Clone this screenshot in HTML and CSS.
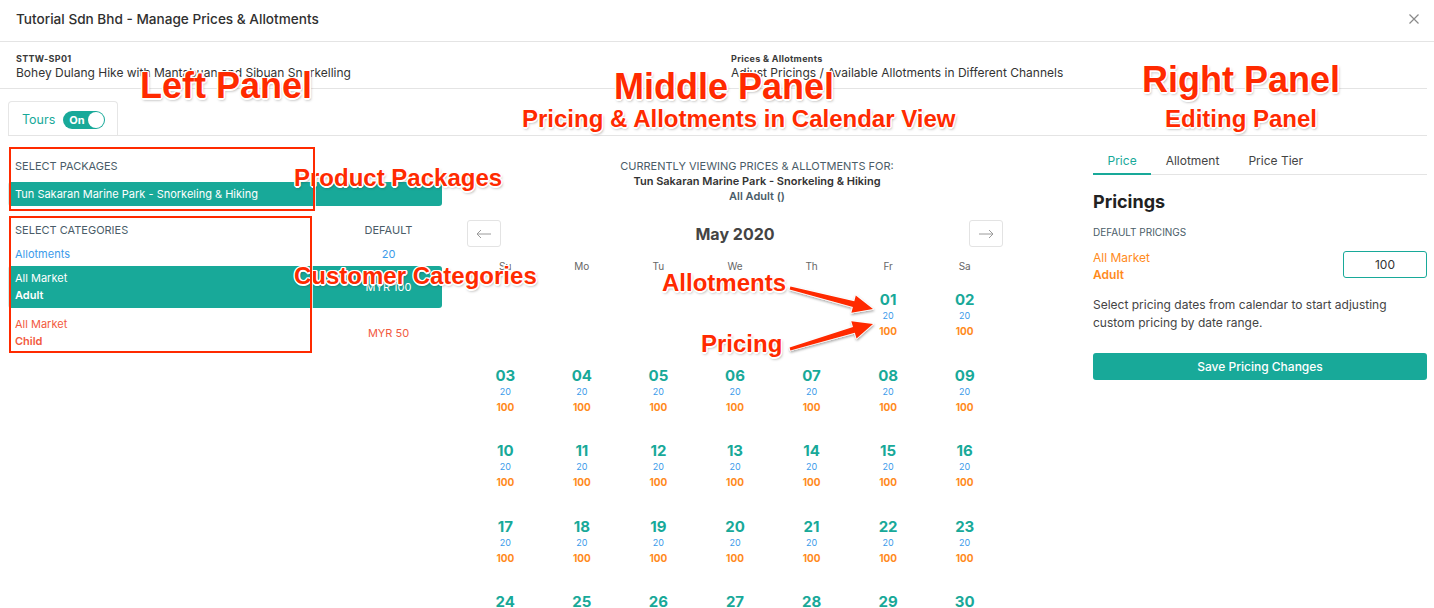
FILE: index.html
```html
<!doctype html>
<html lang="en">
<head>
    <meta charset="UTF-8">
    <meta name="viewport" content="width=device-width, initial-scale=1.0">
    <title>Manage Prices &amp; Allotments</title>
    <link rel="stylesheet" href="styles.css">
</head>
<body>
<div class="modal">
    <header class="modal-header">
        <h1 class="modal-title">Tutorial Sdn Bhd - Manage Prices &amp; Allotments</h1>
        <button class="close-btn" aria-label="Close">
            <svg width="10" height="10" viewBox="0 0 10 10"><path d="M0.5 0.5 L9.5 9.5 M9.5 0.5 L0.5 9.5" stroke="#8a8a8a" stroke-width="1.2" fill="none"/></svg>
        </button>
    </header>

    <div class="product-meta">
        <div class="meta-item">
            <div class="meta-label">STTW-SP01</div>
            <div class="meta-value">Bohey Dulang Hike with Mantabuan and Sibuan Snorkelling</div>
        </div>
        <div class="meta-item">
            <div class="meta-label">Prices &amp; Allotments</div>
            <div class="meta-value">Adjust Pricings / Available Allotments in Different Channels</div>
        </div>
    </div>

    <div class="type-tabs">
        <div class="type-tab">
            <span>Tours</span>
            <span class="toggle">On<span class="knob"></span></span>
        </div>
    </div>

    <div class="workspace">
        <!-- left: packages + categories -->
        <aside class="left-panel">
            <div class="section-label">Select Packages</div>
            <div class="package-item">Tun Sakaran Marine Park - Snorkeling &amp; Hiking</div>

            <div class="cat-head">
                <span class="section-label">Select Categories</span>
                <span class="section-label col-default">Default</span>
            </div>
            <div class="cat-list">
                <div class="cat-row allotment">
                    <div>Allotments</div>
                    <div class="col-default">20</div>
                </div>
                <div class="cat-row selected">
                    <div>All Market<br><b>Adult</b></div>
                    <div class="col-default">MYR 100</div>
                </div>
                <div class="cat-row child">
                    <div>All Market<br><b>Child</b></div>
                    <div class="col-default">MYR 50</div>
                </div>
            </div>
        </aside>

        <!-- middle: calendar -->
        <section class="middle-panel">
            <div class="viewing">
                <div>Currently viewing prices &amp; allotments for:</div>
                <div class="viewing-package">Tun Sakaran Marine Park - Snorkeling &amp; Hiking</div>
                <div class="viewing-category">All Adult ()</div>
            </div>

            <div class="calendar">
                <div class="cal-nav">
                    <button class="nav-btn" aria-label="Previous month">
                        <svg width="16" height="10" viewBox="0 0 16 10"><path d="M15 5 H1 M5 1 L1 5 L5 9" stroke="#9a9a9a" stroke-width="1" fill="none"/></svg>
                    </button>
                    <div class="cal-month">May 2020</div>
                    <button class="nav-btn" aria-label="Next month">
                        <svg width="16" height="10" viewBox="0 0 16 10"><path d="M1 5 H15 M11 1 L15 5 L11 9" stroke="#9a9a9a" stroke-width="1" fill="none"/></svg>
                    </button>
                </div>
                <div class="cal-weekdays">
                    <span>Su</span><span>Mo</span><span>Tu</span><span>We</span><span>Th</span><span>Fr</span><span>Sa</span>
                </div>
                <div class="cal-days" id="cal-days"></div>
            </div>
        </section>

        <!-- right: editing panel -->
        <aside class="right-panel">
            <nav class="edit-tabs">
                <span class="edit-tab active">Price</span>
                <span class="edit-tab">Allotment</span>
                <span class="edit-tab">Price Tier</span>
            </nav>
            <h2 class="edit-title">Pricings</h2>
            <div class="edit-label">Default Pricings</div>
            <div class="price-row">
                <div class="price-name">All Market<br><b>Adult</b></div>
                <input class="price-input" type="text" value="100">
            </div>
            <p class="edit-hint">Select pricing dates from calendar to start adjusting custom pricing by date range.</p>
            <button class="save-btn">Save Pricing Changes</button>
        </aside>
    </div>
</div>

<!-- tutorial callouts laid over the screenshot -->
<div class="callouts">
    <div class="callout big" style="left:140px;top:68px">Left Panel</div>
    <div class="callout big" style="left:614px;top:69px">Middle Panel</div>
    <div class="callout small" style="left:522px;top:107px">Pricing &amp; Allotments in Calendar View</div>
    <div class="callout big" style="left:1142px;top:62px">Right Panel</div>
    <div class="callout small" style="left:1165px;top:107px">Editing Panel</div>
    <div class="callout small" style="left:294px;top:166px">Product Packages</div>
    <div class="callout small" style="left:294px;top:264px">Customer Categories</div>
    <div class="callout small" style="left:662px;top:271px">Allotments</div>
    <div class="callout small" style="left:701px;top:332px">Pricing</div>

    <div class="frame" style="left:9px;top:147px;width:306px;height:64px"></div>
    <div class="frame" style="left:9px;top:216px;width:303px;height:137px"></div>

    <svg class="arrows" width="1434" height="608" viewBox="0 0 1434 608">
        <defs>
            <filter id="shadow" x="-20%" y="-40%" width="140%" height="180%">
                <feDropShadow dx="0.5" dy="1.5" stdDeviation="1.2" flood-color="#000" flood-opacity="0.35"/>
            </filter>
        </defs>
        <g filter="url(#shadow)" fill="#ff2a00" stroke="#fff" stroke-width="1.5" stroke-linejoin="round" paint-order="stroke">
            <polygon points="789.6,289.5 852.9,307 851.4,312.8 873,309 855.8,295.4 854.3,301.2 790.4,286.5"/>
            <polygon points="790.4,350.4 854.8,332.7 856.5,338.4 873,324 851.3,321.2 853,326.9 789.6,347.6"/>
        </g>
    </svg>
</div>

<script>
    // May 2020 starts on a Friday
    const days = document.getElementById('cal-days');
    const firstWeekday = 5;
    for (let i = 0; i < firstWeekday; i++) {
        days.appendChild(document.createElement('div'));
    }
    for (let d = 1; d <= 31; d++) {
        const cell = document.createElement('div');
        cell.className = 'day';
        cell.innerHTML = `<span class="day-num">${String(d).padStart(2, '0')}</span>` +
            `<span class="day-allot">20</span><span class="day-price">100</span>`;
        days.appendChild(cell);
    }
</script>
</body>
</html>
```

FILE: styles.css
```css
* {
    box-sizing: border-box;
}

body {
    margin: 0;
    width: 1434px;
    height: 608px;
    overflow: hidden;
    background: #fff;
    color: #333;
    font-family: Inter, "Liberation Sans", Arial, sans-serif;
    position: relative;
}

button {
    font-family: inherit;
}

.modal-header {
    height: 42px;
    display: flex;
    align-items: center;
    justify-content: space-between;
    padding: 0 15px 3px 16px;
    border-bottom: 1px solid #e4e4e4;
}

.modal-title {
    margin: 0;
    font-size: 13.6px;
    font-weight: 500;
    color: #2f2f2f;
}

.close-btn {
    border: 0;
    background: none;
    padding: 0;
    display: flex;
}

.product-meta {
    display: grid;
    grid-template-columns: 715px 1fr;
    padding: 11px 16px 8px;
    margin-right: 7px;
    border-bottom: 1px solid #e4e4e4;
}

.meta-label {
    font-size: 9px;
    line-height: 12px;
    font-weight: 700;
    color: #3a3a3a;
    letter-spacing: 0.3px;
}

.meta-value {
    font-size: 12px;
    line-height: 15px;
    color: #333;
}

.type-tabs {
    margin: 12px 7px 0 8px;
    border-bottom: 1px solid #e4e4e4;
    display: flex;
}

.type-tab {
    width: 110px;
    height: 34px;
    display: flex;
    align-items: center;
    gap: 8px;
    padding: 2px 0 0 13px;
    border: 1px solid #e6e6e6;
    border-bottom: 0;
    border-radius: 4px 4px 0 0;
    color: #18a999;
    font-size: 12.5px;
}

.toggle {
    position: relative;
    width: 42px;
    height: 18px;
    border-radius: 9px;
    background: #18a999;
    color: #fff;
    font-size: 11px;
    font-weight: 700;
    line-height: 18px;
    padding-left: 6px;
}

.toggle .knob {
    position: absolute;
    right: 1px;
    top: 1px;
    width: 16px;
    height: 16px;
    border-radius: 50%;
    background: #fff;
}

.workspace {
    display: grid;
    grid-template-columns: 434px 630px 355px;
    padding: 0 7px 0 8px;
}

/* left panel */

.left-panel {
    padding-top: 23px;
}

.section-label {
    font-size: 11px;
    line-height: 15px;
    text-transform: uppercase;
    color: #4a5c68;
    padding-left: 7px;
}

.package-item {
    margin-top: 8px;
    height: 24px;
    line-height: 24px;
    padding-left: 7px;
    border-radius: 3px;
    background: #18a999;
    color: #fff;
    font-size: 11px;
}

.cat-head {
    margin-top: 17px;
    display: grid;
    grid-template-columns: 1fr 107px;
}

.cat-head .col-default {
    padding-left: 0;
}

.col-default {
    text-align: center;
}

.cat-list {
    margin-top: 8px;
    display: flex;
    flex-direction: column;
    gap: 3px;
}

.cat-row {
    display: grid;
    grid-template-columns: 1fr 107px;
    align-items: center;
    font-size: 11px;
    line-height: 17px;
    padding: 4px 0 4px 7px;
    border-radius: 3px;
}

.cat-row b {
    font-weight: 600;
}

.cat-row.allotment {
    padding: 0 0 0 7px;
    color: #3b9bea;
}

.cat-row.selected {
    background: #18a999;
    color: #fff;
}

.cat-row.child {
    padding-top: 5px;
    color: #f25a3e;
}

/* middle panel */

.middle-panel {
    padding-top: 23px;
}

.viewing {
    text-align: center;
    font-size: 11px;
    line-height: 15px;
    color: #4a5c68;
}

.viewing > div:first-child {
    text-transform: uppercase;
}

.viewing-package {
    font-weight: 600;
    color: #333;
}

.viewing-category {
    font-weight: 600;
}

.calendar {
    width: 536px;
    margin: 16px 0 0 25px;
}

.cal-nav {
    display: flex;
    align-items: center;
    justify-content: space-between;
}

.nav-btn {
    width: 34px;
    height: 27px;
    border: 1px solid #e3e3e3;
    border-radius: 3px;
    background: #fff;
    display: flex;
    align-items: center;
    justify-content: center;
    padding: 0;
}

.cal-month {
    font-size: 16px;
    font-weight: 700;
    color: #444;
}

.cal-weekdays {
    margin-top: 12px;
    display: grid;
    grid-template-columns: repeat(7, 1fr);
    text-align: center;
    font-size: 10px;
    line-height: 14px;
    color: #666;
}

.cal-days {
    margin-top: 18px;
    display: grid;
    grid-template-columns: repeat(7, 1fr);
    row-gap: 27.5px;
}

.day {
    display: flex;
    flex-direction: column;
    align-items: center;
}

.day-num {
    font-size: 15px;
    line-height: 18px;
    font-weight: 700;
    color: #18a999;
}

.day-allot {
    font-size: 9px;
    line-height: 14px;
    color: #3b9bea;
}

.day-price {
    font-size: 10px;
    line-height: 16px;
    font-weight: 700;
    color: #ff8a1c;
}

/* right panel */

.right-panel {
    padding: 15px 0 0 21px;
}

.edit-tabs {
    display: flex;
    border-bottom: 1px solid #e4e4e4;
}

.edit-tab {
    padding: 2px 14.5px 4px;
    margin-bottom: -1px;
    font-size: 12px;
    line-height: 16px;
    color: #444;
    border-bottom: 2px solid transparent;
}

.edit-tab.active {
    color: #18a999;
    border-bottom-color: #18a999;
}

.edit-title {
    margin: 16px 0 0;
    font-size: 18px;
    line-height: 22px;
    font-weight: 700;
    color: #222;
}

.edit-label {
    margin-top: 12px;
    font-size: 10px;
    line-height: 14px;
    text-transform: uppercase;
    color: #4a5c68;
}

.price-row {
    margin-top: 10px;
    display: flex;
    justify-content: space-between;
    align-items: center;
}

.price-name {
    font-size: 12px;
    line-height: 17px;
    color: #ff8a1c;
}

.price-name b {
    font-weight: 600;
}

.price-input {
    width: 84px;
    height: 27px;
    margin-top: -4px;
    border: 1px solid #18a999;
    border-radius: 3px;
    text-align: center;
    font: 12px Inter, "Liberation Sans", sans-serif;
    color: #333;
}

.edit-hint {
    margin: 13px 0 0;
    font-size: 12px;
    line-height: 17.5px;
    color: #444;
}

.save-btn {
    margin-top: 22px;
    width: 100%;
    height: 27px;
    border: 0;
    border-radius: 3px;
    background: #18a999;
    color: #fff;
    font-size: 12px;
    font-weight: 500;
}

/* callouts */

.callouts {
    position: absolute;
    inset: 0;
    pointer-events: none;
}

.callout {
    position: absolute;
    white-space: nowrap;
    font-family: "Liberation Sans", Arial, sans-serif;
    font-weight: 700;
    line-height: 1;
    color: #ff2a00;
    text-shadow:
        -1px -1px 0 #fff, 1px -1px 0 #fff, -1px 1px 0 #fff, 1px 1px 0 #fff,
        0 -1.5px 0 #fff, 0 1.5px 0 #fff, -1.5px 0 0 #fff, 1.5px 0 0 #fff,
        1px 2px 3px rgba(0, 0, 0, 0.4);
}

.callout.big {
    font-size: 36px;
}

.callout.small {
    font-size: 24px;
}

.frame {
    position: absolute;
    border: 2.5px solid #ff2a00;
    box-shadow: 0 0 0 1px rgba(255, 255, 255, 0.8);
}

.arrows {
    position: absolute;
    left: 0;
    top: 0;
}
```
